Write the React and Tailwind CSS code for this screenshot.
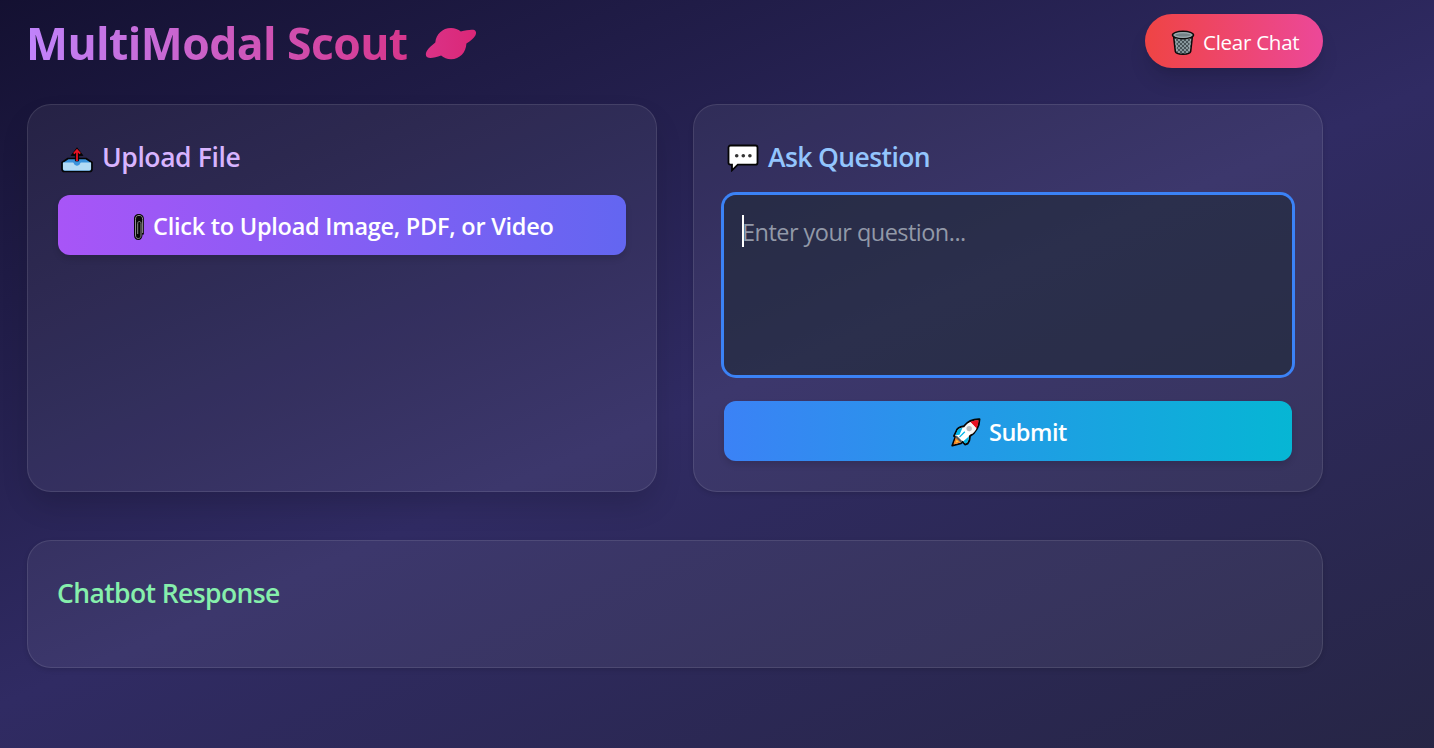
function Planet() {
  return (
    <svg className="ml-[17px] mt-[14px] h-[33px] w-[52px]" viewBox="0 0 52 33">
      <defs>
        <linearGradient id="planet" x1="0" x2="1" y1="0" y2="0">
          <stop offset="0" stopColor="#da3287" />
          <stop offset="1" stopColor="#db2777" />
        </linearGradient>
      </defs>
      <path
        fill="url(#planet)"
        d="M10.3 15.5C11 7.2 17.5 1 26 1c3.900 0 7.200 1.200 9.800 3.500C41 3.200 45.500 2.300 48.300 2.800c2.900.6 3.500 3.200 1.900 6-1.600 2.700-5 5.400-8.800 7.800C41 25.500 34.800 32.300 26 32.300c-3.800 0-7.200-1.300-9.900-3.700-5 1.600-10.500 3.200-13.300 2C.5 29.600.3 26.600 2 23.800c1.500-2.500 4.600-5.300 8.300-8.300Z"
      />
    </svg>
  );
}

function Trash() {
  return (
    <svg className="mt-[3px] h-[26px] w-[24px]" viewBox="0 0 24 26">
      <defs>
        <pattern id="mesh" width="4" height="4" patternUnits="userSpaceOnUse">
          <rect width="4" height="4" fill="#87969b" />
          <path d="M0 0l4 4M4 0l-4 4" stroke="#3f4b4f" strokeWidth="0.900" />
        </pattern>
      </defs>
      <path d="M2.500 5.500 4.300 21.500c.3 1.900 3.500 2.800 7.700 2.800s7.400-.9 7.700-2.800l1.800-16Z" fill="url(#mesh)" stroke="#0a0a0a" strokeWidth="1.500" />
      <ellipse cx="12" cy="5" rx="10.500" ry="3.700" fill="#8d9ba0" stroke="#0a0a0a" strokeWidth="1.500" />
      <ellipse cx="12" cy="5" rx="8.500" ry="2.200" fill="#748287" stroke="#a4b1b6" strokeWidth="0.900" />
      <path d="M4.500 9 6 21.500M19.500 9 18 21.500" stroke="#a4b1b6" strokeWidth="0.800" fill="none" />
    </svg>
  );
}

function Outbox() {
  return (
    <svg className="h-[26px] w-[32px]" viewBox="0 0 32 26">
      <path d="M1 15.500 7 11.500h18l6 4V22c0 1.500-1 2.500-2.500 2.500h-25C2 24.500 1 23.500 1 22Z" fill="#3b93dc" stroke="#050505" strokeWidth="1.700" strokeLinejoin="round" />
      <path d="M2 15.600h9.800c.6 0 .9.300 1.100.9.400 1.300 1.700 2.200 3.100 2.200s2.700-.9 3.100-2.200c.2-.6.500-.9 1.100-.9H30v5.900c0 1.200-.7 1.900-1.900 1.900H3.900C2.700 23.400 2 22.700 2 21.500Z" fill="#b3dbf5" />
      <path d="M14.400 14V8.500h-4.300L16 .8l5.900 7.700h-4.300V14Z" fill="#050505" stroke="#050505" strokeWidth="0.800" strokeLinejoin="round" />
      <path d="M16 14V4M12.800 6.700 16 3.200l3.200 3.500" fill="none" stroke="#e81123" strokeWidth="1.800" />
    </svg>
  );
}

function Clip() {
  return (
    <svg className="mt-[3px] h-[28px] w-[12px]" viewBox="0 0 12 28">
      <path d="M1 6C1 2.500 2.900 1 5.800 1S10.900 2.500 10.900 6v15.500h-1.300c-.2 3.500-1.600 5.500-4.200 5.500S1 25.200 1 22Z" fill="#080808" />
      <path d="M9.600 20V6.300c0-2.400-1.200-3.900-3.600-3.900S2.500 3.900 2.500 6.300V22c0 2.200 1 3.500 2.800 3.500S8 24.200 8 22V10.500c0-1.300-.7-2-1.700-2s-1.600.7-1.600 2V21" fill="none" stroke="#8c8c8c" strokeWidth="1" />
    </svg>
  );
}

function Bubble() {
  return (
    <svg className="h-[28px] w-[32px]" viewBox="0 0 32 28">
      <path d="M3.500 1.500h25c1.300 0 2 .7 2 2v15.200c0 1.300-.7 2-2 2H10.800L5 26.300v-5.600H3.500c-1.300 0-2-.7-2-2V3.500c0-1.300.7-2 2-2Z" fill="#fff" stroke="#050505" strokeWidth="1.800" />
      <circle cx="9.700" cy="11.700" r="1.800" fill="#333" />
      <circle cx="16.300" cy="11.700" r="1.800" fill="#333" />
      <circle cx="22.900" cy="11.700" r="1.800" fill="#333" />
    </svg>
  );
}

function Rocket() {
  return (
    <svg className="mt-[3px] h-[29px] w-[30px]" viewBox="0 0 30 29">
      <path d="M28.500 1.200C22 1 17 3 12.800 8.300c-4 .4-6.800 2-7.800 5.700l-2 4 1.300 1.200L1.300 27.600l8.700-2.200 1.800-1.600 2.200 2.700 2.700-1c1.600-2.300 2.300-4.700 2.100-7.200C24.500 14.500 28.300 8.500 28.500 1.200Z" fill="#fff" stroke="#050505" strokeWidth="1.900" strokeLinejoin="round" />
      <path d="M11.500 9.700c-3.100.3-5 1.600-5.800 4.300l-1.500 3.300 4.300-.6ZM17.800 18.500l-5.500 4.800 1.900 2.200 1.600-.6c1.500-1.900 2.100-3.800 2-6.400Z" fill="#00b5e8" />
      <path d="M27.500 2.200c-3.300 0-5.900.5-8.200 1.700l6.200 6.500c1.300-2.400 1.900-5.100 2-8.200Z" fill="#e81123" />
      <path d="M13.500 9 20.800 16.200c2-1.600 3.500-3.500 4.700-5.800l-6.200-6.500C17 5 15 6.700 13.500 9Z" fill="#f6f6f6" />
      <circle cx="18.200" cy="10.600" r="2.700" fill="#b9bdc2" />
      <path d="m13.800 13.800-5.300 5.300" stroke="#00b5e8" strokeWidth="1.300" />
      <path d="m5.600 17.500 5.700 5.700-1.700 1.700-5.400-5.200Z" fill="#5b5b5b" />
      <path d="m4.700 19.700 4.900 4.700-7.200 2.100Z" fill="#f58220" />
      <path d="m5.600 21.700 2 2-3 .9Z" fill="#ffc83d" />
    </svg>
  );
}

const card = "rounded-[24px] border border-white/10 bg-white/6 px-[30px]";
const heading = "flex h-[42px] items-center text-[26.500px] font-semibold tracking-[-0.600px] whitespace-nowrap";
const action = "flex h-[60px] w-full items-center rounded-[12px] text-[23.500px] font-semibold whitespace-nowrap shadow-[0_4px_6px_rgba(0,0,0,0.12)]";

export default function App() {
  return (
    <div
      className="h-[748px] overflow-hidden bg-[linear-gradient(156.600deg,#0f0c29_-113px,#302b63_647px,#24243e_1407px)] pl-[27px] pr-[111px] pt-[14px] text-white"
      style={{ fontFamily: '"Open Sans", "Noto Sans", sans-serif' }}
    >
      <header className="flex h-[54px] items-start justify-between">
        <h1 className="-mt-px -ml-px flex text-[44.500px] leading-[60px] font-bold tracking-[-0.580px]">
          <span className="bg-[linear-gradient(90deg,#c084fc,#d7368c)] bg-clip-text whitespace-nowrap text-transparent">
            MultiModal Scout
          </span>
          <Planet />
        </h1>
        <button className="flex h-[54px] w-[178px] items-center rounded-full bg-[linear-gradient(90deg,#ef4444,#ec4899)] pl-[26px] text-[20.500px] tracking-[-0.250px] shadow-[0_15px_22px_-4px_rgba(0,0,0,0.12),0_6px_9px_-6px_rgba(0,0,0,0.12)]">
          <Trash />
          <span className="mt-[3px] ml-[8px] whitespace-nowrap">Clear Chat</span>
        </button>
      </header>

      <main>
        <div className="mt-[36px] grid grid-cols-2 gap-[36px]">
          <section className={`${card} h-[388px] pt-[30px] shadow-[0_15px_30px_-4px_rgba(0,0,0,0.16)]`}>
            <h2 className={`${heading} text-[#d8b4fe]`}>
              <span className="ml-[3px] mt-[8px]"><Outbox /></span>
              <span className="mt-[4px] ml-[9px] tracking-[-0.400px]">Upload File</span>
            </h2>
            <button className={`${action} mt-[18px] bg-[linear-gradient(90deg,#a855f7,#6366f1)] pl-[75px] tracking-[-0.250px]`}>
              <Clip />
              <span className="mt-[4px] ml-[8px]">Click to Upload Image, PDF, or Video</span>
            </button>
          </section>

          <section className={`${card} h-[388px] pt-[30px] shadow-[0_2px_5px_rgba(0,0,0,0.12)]`}>
            <h2 className={`${heading} text-[#93c5fd]`}>
              <span className="ml-[3px] mt-[3px]"><Bubble /></span>
              <span className="mt-[4px] ml-[9px]">Ask Question</span>
            </h2>
            <div className="mt-[18px] flex h-[180px] items-start rounded-[12px] bg-[#1f2937]/60 pl-[18px] pt-[20px] text-[23.500px] leading-[34px] tracking-[-0.530px] text-[#9299a8] ring-3 ring-[#3b82f6]">
              <span className="-mr-[2px] h-[32px] w-[2px] bg-white" />
              <span className="whitespace-nowrap">Enter your question...</span>
            </div>
            <button className={`${action} mt-[26px] bg-[linear-gradient(90deg,#3b82f6,#06b6d4)] pl-[227px] tracking-[-0.500px]`}>
              <Rocket />
              <span className="mt-[4px] ml-[8px]">Submit</span>
            </button>
          </section>
        </div>

        <section className={`${card} mt-[48px] h-[128px] pt-[32px] shadow-[0_2px_5px_rgba(0,0,0,0.12)]`}>
          <h2 className={`${heading} -ml-px text-[#86efac]`}>Chatbot Response</h2>
        </section>
      </main>
    </div>
  );
}
